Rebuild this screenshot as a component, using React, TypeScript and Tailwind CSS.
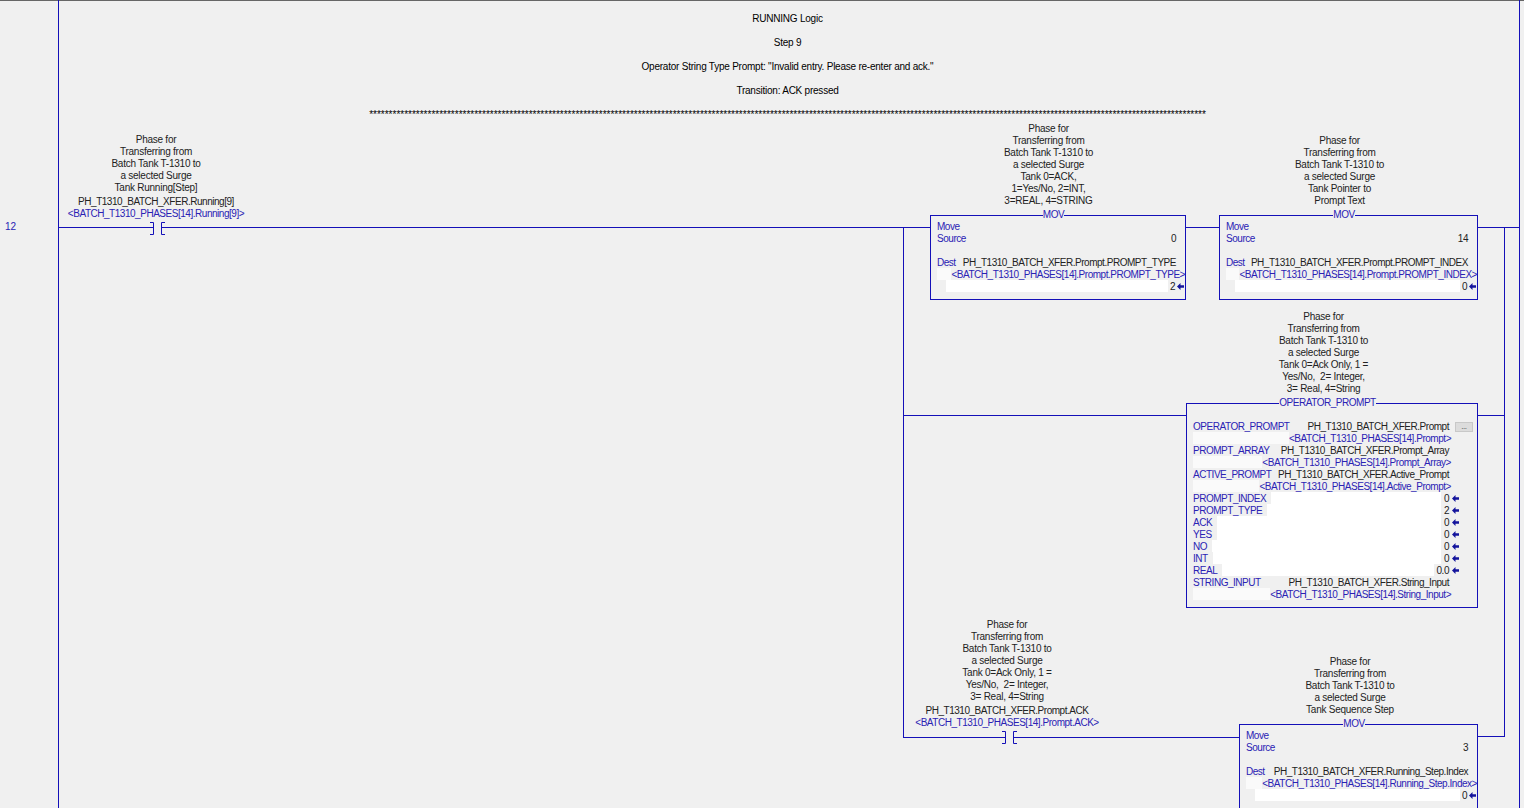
const stars = '*'.repeat(215);

function Comment({ lines, tag, alias }: { lines: string[]; tag?: string; alias?: string }) {
    return (
        <div className="flex flex-col items-center tracking-[-0.25px] text-[#222]">
            {lines.map((line, i) => (
                <div key={i} className="h-3 leading-[14px] whitespace-pre">{line}</div>
            ))}
            {tag && <div className="mt-[2px] h-3 leading-[14px] tracking-[-0.47px] whitespace-pre">{tag}</div>}
            {alias && <div className="h-3 leading-[14px] tracking-[-0.47px] whitespace-pre text-[#2a22b4]">{alias}</div>}
        </div>
    );
}

function Arrow() {
    return (
        <svg width="7" height="7" viewBox="0 0 7 7" className="shrink-0">
            <path d="M0 3.5 L3.5 0 V2.2 H7 V4.8 H3.5 V7 Z" fill="#14149c" />
        </svg>
    );
}

function Contact({ className }: { className: string }) {
    return (
        <svg width="17" height="13" viewBox="0 0 17 13" className={`absolute ${className}`} fill="none" stroke="#1410b8">
            <path d="M0 0.5 H3.5 V12.5 H0" />
            <path d="M15 0.5 H11.5 V12.5 H15" />
        </svg>
    );
}

function BoxTitle({ text }: { text: string }) {
    return (
        <div className="absolute -top-[8px] left-0 right-[9px] flex justify-center">
            <span className="bg-[#f0f0f0] leading-[14px] text-[#2a22b4]">{text}</span>
        </div>
    );
}

function Mov({ source, dest, alias, value, className }: {
    source: string;
    dest: string;
    alias: string;
    value: string;
    className: string;
}) {
    return (
        <div className={`relative border border-[#1410b8] bg-[#f0f0f0] pt-[4px] pl-[6px] ${className}`}>
            <BoxTitle text="MOV" />
            <div className="h-3 leading-[14px] text-[#2a22b4]">Move</div>
            <div className="flex h-3 justify-between pr-[9px] leading-[14px]">
                <span className="text-[#2a22b4]">Source</span>
                <span className="text-[#222]">{source}</span>
            </div>
            <div className="h-3" />
            <div className="flex h-3 justify-between pr-[9px] leading-[14px]">
                <span className="text-[#2a22b4]">Dest</span>
                <span className="whitespace-pre text-[#222]">{dest}</span>
            </div>
            <div className="flex h-3 leading-[14px]">
                <div className="flex-1 bg-[#fafafa]" />
                <span className="whitespace-pre text-[#2a22b4]">{alias}</span>
            </div>
            <div className="flex h-3 pl-[9px] leading-[14px] text-[#222]">
                <span className="h-3 flex-1 bg-white" />
                <span className="pl-[2px]">{value}</span>
                <span className="ml-[2px] mr-px self-center"><Arrow /></span>
            </div>
        </div>
    );
}

const promptOutputs = [
    { name: 'PROMPT_INDEX', value: '0' },
    { name: 'PROMPT_TYPE', value: '2' },
    { name: 'ACK', value: '0' },
    { name: 'YES', value: '0' },
    { name: 'NO', value: '0' },
    { name: 'INT', value: '0' },
    { name: 'REAL', value: '0.0' },
];

function TagRow({ name, tag, alias, button }: { name: string; tag: string; alias: string; button?: boolean }) {
    return (
        <div>
            <div className="flex h-3 leading-[14px]">
                <span className="text-[#2a22b4]">{name}</span>
                <span className="ml-auto whitespace-pre text-[#222]">{tag}</span>
                <span className="ml-[6px] mr-[4px] w-[18px]">
                    {button && (
                        <span className="mt-[2px] flex h-[10px] items-center justify-center border border-[#c8c8c8] bg-[#dcdcdc] text-[8px] leading-none text-[#444]">...</span>
                    )}
                </span>
            </div>
            <div className="flex h-3 pr-[26px] leading-[14px]">
                <div className="flex-1 bg-[#fafafa]" />
                <span className="whitespace-pre text-[#2a22b4]">{alias}</span>
            </div>
        </div>
    );
}

function OperatorPrompt() {
    return (
        <div className="relative h-[205px] w-[292px] border border-[#1410b8] bg-[#f0f0f0] pt-[16px] pl-[6px]">
            <BoxTitle text="OPERATOR_PROMPT" />
            <TagRow name="OPERATOR_PROMPT" tag="PH_T1310_BATCH_XFER.Prompt" alias="<BATCH_T1310_PHASES[14].Prompt>" button />
            <TagRow name="PROMPT_ARRAY" tag="PH_T1310_BATCH_XFER.Prompt_Array" alias="<BATCH_T1310_PHASES[14].Prompt_Array>" />
            <TagRow name="ACTIVE_PROMPT" tag="PH_T1310_BATCH_XFER.Active_Prompt" alias="<BATCH_T1310_PHASES[14].Active_Prompt>" />
            {promptOutputs.map((row) => (
                <div key={row.name} className="flex h-3 pr-[18px] leading-[14px]">
                    <span className="pr-[5px] text-[#2a22b4]">{row.name}</span>
                    <span className="h-3 flex-1 bg-white" />
                    <span className="pl-[3px] text-[#222]">{row.value}</span>
                    <span className="ml-[3px] self-center"><Arrow /></span>
                </div>
            ))}
            <TagRow name="STRING_INPUT" tag="PH_T1310_BATCH_XFER.String_Input" alias="<BATCH_T1310_PHASES[14].String_Input>" />
        </div>
    );
}

export default function App() {
    return (
        <div className="relative h-[808px] w-[1524px] overflow-hidden bg-[#f0f0f0] font-['Liberation_Sans',Arial,sans-serif] text-[10px] tracking-[-0.47px]">
            <div className="h-px bg-[#666]" />

            {/* Rung comment */}
            <div className="ml-[58px] flex w-[1461px] flex-col items-center gap-3 pt-[11px] pr-[2px] tracking-[-0.23px] text-black">
                <div className="h-3 leading-[14px]">RUNNING Logic</div>
                <div className="h-3 leading-[14px]">Step 9</div>
                <div className="h-3 leading-[14px]">Operator String Type Prompt: "Invalid entry. Please re-enter and ack."</div>
                <div className="h-3 leading-[14px]">Transition: ACK pressed</div>
                <div className="h-3 leading-[14px] tracking-normal whitespace-pre">{stars}</div>
            </div>

            {/* Power rails */}
            <div className="absolute left-[58px] top-0 h-[808px] w-px bg-[#1410b8]" />
            <div className="absolute left-[1519px] top-0 h-[808px] w-px bg-[#1410b8]" />

            <div className="absolute left-[5px] top-[220px] leading-[14px] tracking-normal text-[#2a22b4]">12</div>

            {/* Wires */}
            <div className="absolute left-[58px] top-[227px] h-px w-[95px] bg-[#1410b8]" />
            <div className="absolute left-[162px] top-[227px] h-px w-[768px] bg-[#1410b8]" />
            <div className="absolute left-[1185px] top-[227px] h-px w-[34px] bg-[#1410b8]" />
            <div className="absolute left-[1477px] top-[227px] h-px w-[42px] bg-[#1410b8]" />
            <div className="absolute left-[903px] top-[227px] h-[510px] w-px bg-[#1410b8]" />
            <div className="absolute left-[1504px] top-[227px] h-[510px] w-px bg-[#1410b8]" />
            <div className="absolute left-[903px] top-[415px] h-px w-[283px] bg-[#1410b8]" />
            <div className="absolute left-[1477px] top-[415px] h-px w-[27px] bg-[#1410b8]" />
            <div className="absolute left-[903px] top-[737px] h-px w-[102px] bg-[#1410b8]" />
            <div className="absolute left-[1013px] top-[737px] h-px w-[226px] bg-[#1410b8]" />
            <div className="absolute left-[1477px] top-[736px] h-px w-[27px] bg-[#1410b8]" />

            <Contact className="left-[150px] top-[222px]" />
            <Contact className="left-[1002px] top-[731px]" />

            {/* Instructions on the rung, each with its comment stacked above */}
            <div className="absolute left-[54px] top-[133px] w-[204px]">
                <Comment
                    lines={['Phase for', 'Transferring from', 'Batch Tank T-1310 to', 'a selected Surge', 'Tank Running[Step]']}
                    tag="PH_T1310_BATCH_XFER.Running[9]"
                    alias="<BATCH_T1310_PHASES[14].Running[9]>"
                />
            </div>

            <div className="absolute left-[930px] top-[122px] flex w-[256px] flex-col gap-[9px]">
                <div className="pr-[19px]">
                    <Comment lines={['Phase for', 'Transferring from', 'Batch Tank T-1310 to', 'a selected Surge', 'Tank 0=ACK,', '1=Yes/No, 2=INT,', '3=REAL, 4=STRING']} />
                </div>
                <Mov
                    className="h-[85px]"
                    source="0"
                    dest="PH_T1310_BATCH_XFER.Prompt.PROMPT_TYPE"
                    alias="<BATCH_T1310_PHASES[14].Prompt.PROMPT_TYPE>"
                    value="2"
                />
            </div>

            <div className="absolute left-[1219px] top-[134px] flex w-[259px] flex-col gap-[9px]">
                <div className="pr-[18px]">
                    <Comment lines={['Phase for', 'Transferring from', 'Batch Tank T-1310 to', 'a selected Surge', 'Tank Pointer to', 'Prompt Text']} />
                </div>
                <Mov
                    className="h-[85px]"
                    source="14"
                    dest="PH_T1310_BATCH_XFER.Prompt.PROMPT_INDEX"
                    alias="<BATCH_T1310_PHASES[14].Prompt.PROMPT_INDEX>"
                    value="0"
                />
            </div>

            <div className="absolute left-[1186px] top-[310px] flex w-[292px] flex-col gap-[9px]">
                <div className="pr-[17px]">
                    <Comment lines={['Phase for', 'Transferring from', 'Batch Tank T-1310 to', 'a selected Surge', 'Tank 0=Ack Only, 1 =', 'Yes/No,  2= Integer,', '3= Real, 4=String']} />
                </div>
                <OperatorPrompt />
            </div>

            <div className="absolute left-[907px] top-[618px] w-[200px]">
                <Comment
                    lines={['Phase for', 'Transferring from', 'Batch Tank T-1310 to', 'a selected Surge', 'Tank 0=Ack Only, 1 =', 'Yes/No,  2= Integer,', '3= Real, 4=String']}
                    tag="PH_T1310_BATCH_XFER.Prompt.ACK"
                    alias="<BATCH_T1310_PHASES[14].Prompt.ACK>"
                />
            </div>

            <div className="absolute left-[1239px] top-[655px] flex w-[239px] flex-col gap-[9px]">
                <div className="pr-[17px]">
                    <Comment lines={['Phase for', 'Transferring from', 'Batch Tank T-1310 to', 'a selected Surge', 'Tank Sequence Step']} />
                </div>
                <Mov
                    className="h-[110px]"
                    source="3"
                    dest="PH_T1310_BATCH_XFER.Running_Step.Index"
                    alias="<BATCH_T1310_PHASES[14].Running_Step.Index>"
                    value="0"
                />
            </div>
        </div>
    );
}
